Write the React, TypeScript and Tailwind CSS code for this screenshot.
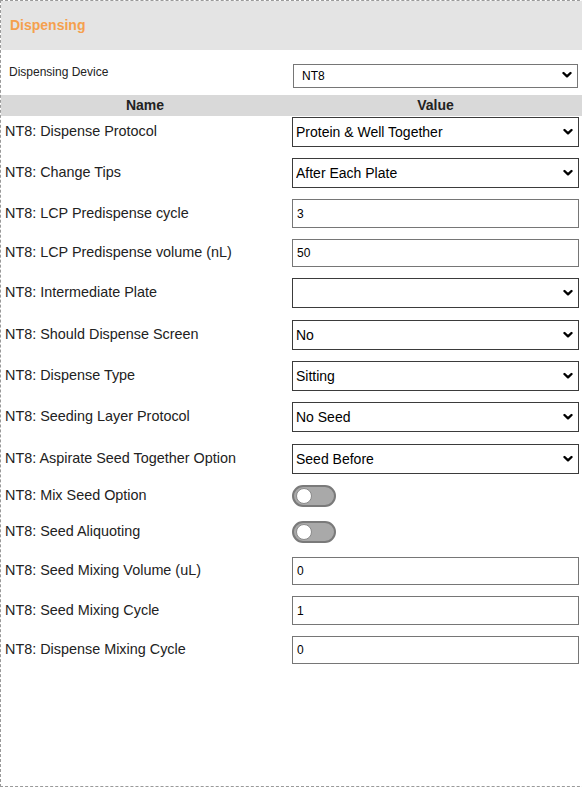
import React from "react";

type Row =
  | { label: string; kind: "select"; value: string; mt: string }
  | { label: string; kind: "input"; value: string; mt: string; h: string }
  | { label: string; kind: "toggle"; mt: string };

const rows: Row[] = [
  { label: "NT8: Dispense Protocol", kind: "select", value: "Protein & Well Together", mt: "mt-[1px]" },
  { label: "NT8: Change Tips", kind: "select", value: "After Each Plate", mt: "mt-[11px]" },
  { label: "NT8: LCP Predispense cycle", kind: "input", value: "3", mt: "mt-[11px]", h: "h-[29px]" },
  { label: "NT8: LCP Predispense volume (nL)", kind: "input", value: "50", mt: "mt-[11px]", h: "h-[28px]" },
  { label: "NT8: Intermediate Plate", kind: "select", value: "", mt: "mt-[11px]" },
  { label: "NT8: Should Dispense Screen", kind: "select", value: "No", mt: "mt-[12px]" },
  { label: "NT8: Dispense Type", kind: "select", value: "Sitting", mt: "mt-[11px]" },
  { label: "NT8: Seeding Layer Protocol", kind: "select", value: "No Seed", mt: "mt-[11px]" },
  { label: "NT8: Aspirate Seed Together Option", kind: "select", value: "Seed Before", mt: "mt-[12px]" },
  { label: "NT8: Mix Seed Option", kind: "toggle", mt: "mt-[11px]" },
  { label: "NT8: Seed Aliquoting", kind: "toggle", mt: "mt-[14px]" },
  { label: "NT8: Seed Mixing Volume (uL)", kind: "input", value: "0", mt: "mt-[14px]", h: "h-[28px]" },
  { label: "NT8: Seed Mixing Cycle", kind: "input", value: "1", mt: "mt-[11px]", h: "h-[29px]" },
  { label: "NT8: Dispense Mixing Cycle", kind: "input", value: "0", mt: "mt-[11px]", h: "h-[28px]" },
];

function Chevron() {
  return (
    <svg width="10" height="7" viewBox="0 0 10 7" className="absolute right-[6px] top-1/2 -translate-y-1/2 pointer-events-none">
      <path d="M1.5 1.5 L5 4.8 L8.5 1.5" fill="none" stroke="#000" strokeWidth="2.4" strokeLinecap="round" strokeLinejoin="round" />
    </svg>
  );
}

function Select({ value, small }: { value: string; small?: boolean }) {
  return (
    <div className="relative">
      <select
        defaultValue={value}
        className={
          small
            ? "appearance-none w-[285px] h-[24px] border border-[#767676] bg-white pl-[8px] text-[12px] text-black outline-none"
            : "appearance-none w-[287px] h-[30px] border border-[#3b3b3b] bg-white pl-[3px] text-[14px] text-black outline-none"
        }
      >
        <option value={value}>{value}</option>
      </select>
      <Chevron />
    </div>
  );
}

function Toggle() {
  return (
    <div className="w-[44px] h-[22px] rounded-full bg-[#a9a9a9] border-2 border-[#7a7a7a] flex items-center pl-[2px]">
      <div className="w-[16px] h-[16px] rounded-full bg-white border border-[#8a8a8a]" />
    </div>
  );
}

export default function App() {
  return (
    <div
      className="w-[600px] h-[787px] border-l border-t border-b border-dashed border-[#9a9a9a] bg-white text-[#222]"
      style={{ fontFamily: '"Liberation Sans", Arial, sans-serif' }}
    >
      <div className="h-[49px] bg-[#e4e4e4] flex items-center pl-[9px]">
        <span className="text-[14px] font-bold text-[#f5a04e]">Dispensing</span>
      </div>
      <div className="h-[45px] flex items-center">
        <div className="w-[292px] pl-[8px] text-[12px] text-[#222] -mt-[2px]">Dispensing Device</div>
        <div className="mt-[5px]">
          <Select value="NT8" small />
        </div>
      </div>
      <div className="h-[21px] bg-[#d9d9d9] flex items-center text-[14px] font-bold text-[#222]">
        <div className="w-[288px] text-center">Name</div>
        <div className="w-[293px] text-center">Value</div>
      </div>
      <div className="flex flex-col">
        {rows.map((r) => (
          <div key={r.label} className={"flex items-center " + r.mt}>
            <div className="w-[291px] pl-[4px] text-[14.4px] text-[#222]">{r.label}</div>
            {r.kind === "select" && <Select value={r.value} />}
            {r.kind === "input" && (
              <input
                defaultValue={r.value}
                className={"w-[287px] border border-[#767676] bg-white pl-[4px] text-[12px] text-black outline-none " + r.h}
              />
            )}
            {r.kind === "toggle" && <Toggle />}
          </div>
        ))}
      </div>
    </div>
  );
}
